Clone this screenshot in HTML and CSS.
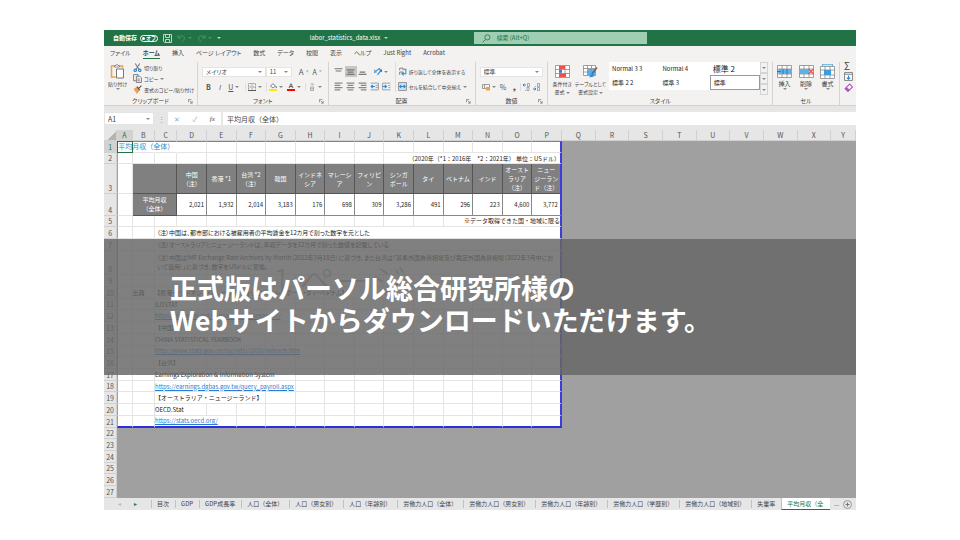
FILE: index.html
```html
<!DOCTYPE html>
<html lang="ja">
<head>
  <meta charset="UTF-8" />
  <meta name="viewport" content="width=device-width, initial-scale=1" />
  <title>labor_statistics_data.xlsx</title>
  <link rel="stylesheet" href="styles.css">
</head>
<body>
  <!-- アイコン定義 -->
  <svg class="defs" aria-hidden="true">
    <symbol id="i-save" viewBox="0 0 9 9"><path d="M.5.5h8v8h-7l-1-1zM2.5.5v3h4v-3M2.5 8.500v-3h4v3" fill="none" stroke="#b9d8c5"/></symbol>
    <symbol id="i-undo" viewBox="0 0 9 9"><path d="M1 1v3h3M1 4c2-3 6-3 6.500 0 0 2-2 3-3 4" fill="none" stroke="#4d9369"/></symbol>
    <symbol id="i-redo" viewBox="0 0 9 9"><path d="M8 1v3H5M8 4C6 1 2 1 1.500 4c0 2 2 3 3 4" fill="none" stroke="#4d9369"/></symbol>
    <symbol id="i-search" viewBox="0 0 8 8"><circle cx="4.800" cy="3" r="2.300" fill="none" stroke="#2f7d51" stroke-width=".8"/><path d="M3 5L.5 7.500" stroke="#2f7d51" stroke-width=".8"/></symbol>
    <symbol id="i-paste" viewBox="0 0 14 15"><path d="M4 2H1v11h4M9 2h3v2" fill="none" stroke="#e8a54c" stroke-width="1.500"/><path d="M4 3V1.500h1.500a1 1 0 0 1 2 0H9V3z" fill="#fff" stroke="#777" stroke-width=".8"/><path d="M6 5h7v9H6z" fill="#fff" stroke="#777"/></symbol>
    <symbol id="i-cut" viewBox="0 0 8 8"><path d="M2 .5L5.500 6M6 .5L2.500 6" stroke="#777" stroke-width=".9"/><circle cx="2" cy="6.500" r="1.100" fill="none" stroke="#2b88d8"/><circle cx="6" cy="6.500" r="1.100" fill="none" stroke="#2b88d8"/></symbol>
    <symbol id="i-copy" viewBox="0 0 8 8"><path d="M3 6H.5V.5h4V2M3 2h3l1.500 1.500v4H3zM4 4.500h2M4 6h2" fill="none" stroke="#777" stroke-width=".8"/></symbol>
    <symbol id="i-brush" viewBox="0 0 8 8"><path d="M.5 3.500l3-2 2.500 3L3.500 8z" fill="#f0a04b"/><path d="M3.500 1.500l2.500 3M5 3l2.500-2.500" stroke="#555"/></symbol>
    <symbol id="i-border" viewBox="0 0 8 8"><path d="M.5.5h7v7h-7zM4 .5v7M.5 4h7" fill="none" stroke="#999" stroke-dasharray="1 .5"/><path d="M0 7.500h8" stroke="#555"/></symbol>
    <symbol id="i-fill" viewBox="0 0 8 8"><path d="M1.500 3L4 .7 6.500 3 4 5z" fill="#fff" stroke="#666" stroke-width=".8"/><path d="M6.800 3l.7 2" stroke="#2b88d8"/><path d="M0 6h8v2H0z" fill="#ffeb00"/></symbol>
    <symbol id="i-color" viewBox="0 0 8 8"><path d="M2 5L4 .7 6 5M2.700 3.600h2.600" fill="none" stroke="#555" stroke-width=".9"/><path d="M0 6h8v2H0z" fill="#f00"/></symbol>
    <symbol id="i-ruby" viewBox="0 0 8 8"><path d="M2.500 1h3L4 2.500M2.500 4h3v3.500h-3zM2.500 5.700h3" fill="none" stroke="#999" stroke-width=".8"/></symbol>
    <symbol id="i-vtop" viewBox="0 0 8 8"><path d="M.5 1.500h7M1.500 3.500h5" stroke="#777"/></symbol>
    <symbol id="i-vmid" viewBox="0 0 8 8"><path d="M.5 2.500h7M1.500 4.500h5M.5 6.500h7" stroke="#777"/></symbol>
    <symbol id="i-vbot" viewBox="0 0 8 8"><path d="M1.500 4.500h5M.5 6.500h7" stroke="#777"/></symbol>
    <symbol id="i-left" viewBox="0 0 8 8"><path d="M.5 1h7M.5 3h5M.5 5h7M.5 7h5" stroke="#888" stroke-width=".9"/></symbol>
    <symbol id="i-center" viewBox="0 0 8 8"><path d="M.5 1h7M1.500 3h5M.5 5h7M1.500 7h5" stroke="#888" stroke-width=".9"/></symbol>
    <symbol id="i-right" viewBox="0 0 8 8"><path d="M.5 1h7M2.500 3h5M.5 5h7M2.500 7h5" stroke="#888" stroke-width=".9"/></symbol>
    <symbol id="i-angle" viewBox="0 0 8 8"><path d="M1 5l5-4M4 7l3.500-4.500M5.500 2.500h2v2" fill="none" stroke="#2b88d8"/><path d="M1 2.500l2 2.500" stroke="#888"/></symbol>
    <symbol id="i-outdent" viewBox="0 0 8 8"><path d="M.5 1h7v6h-7M5 3h2.500M5 5h2.500" fill="none" stroke="#999" stroke-width=".8"/><path d="M4.500 4H1M2.500 2.500L1 4l1.500 1.500" fill="none" stroke="#2b88d8"/></symbol>
    <symbol id="i-indent" viewBox="0 0 8 8"><path d="M7.500 1h-7v6h7M5.500 3h2M5.500 5h2" fill="none" stroke="#999" stroke-width=".8"/><path d="M.5 4H4M2.500 2.500L4 4 2.500 5.500" fill="none" stroke="#2b88d8"/></symbol>
    <symbol id="i-wrap" viewBox="0 0 8 8"><path d="M1.500 3V1h3v2M1.500 7V4.500h3" fill="none" stroke="#777" stroke-width=".8"/><path d="M5 2h2v4H3.500M5 4.500L3.500 6 5 7.500" fill="none" stroke="#2b88d8" stroke-width=".9"/></symbol>
    <symbol id="i-merge" viewBox="0 0 8 8"><path d="M.5.5h7v7h-7z" fill="#cfe6f7" stroke="#888" stroke-width=".8"/><path d="M1.500 4h5M3 2.500L1.500 4 3 5.500M5 2.500L6.500 4 5 5.500" fill="none" stroke="#2b88d8" stroke-width=".9"/></symbol>
    <symbol id="i-money" viewBox="0 0 8 8"><path d="M.5 1.500h7v4h-7zM2.500 1.500v4" fill="none" stroke="#888" stroke-width=".8"/><path d="M4 4h4v3.500H4z" fill="#f0a04b"/></symbol>
    <symbol id="i-dec1" viewBox="0 0 8 8"><path d="M0 2h3M1.500.7L0 2l1.500 1.300" fill="none" stroke="#2b88d8"/><path d="M4.500.5h2v3h-2zM2 7.500h1M4 4.500h2v3H4z" fill="none" stroke="#888" stroke-width=".7"/></symbol>
    <symbol id="i-dec2" viewBox="0 0 8 8"><path d="M0 6h3M1.500 4.700L3 6 1.500 7.300" fill="none" stroke="#2b88d8"/><path d="M4.500.5h2v3h-2zM4.500 4.500h2v3h-2zM2 3.500h1" fill="none" stroke="#888" stroke-width=".7"/></symbol>
    <symbol id="i-cond" viewBox="0 0 15 13"><path d="M.5.5h14v12H.5zM5 .5v12M10 .5v12M.5 4.500h14M.5 8.500h14" fill="#fff" stroke="#888" stroke-width=".8"/><path d="M4 1h6v3H4zM4 8.500h7v3.500H4z" fill="#f0504a"/><path d="M4 4.800h3v3H4z" fill="#2b88d8"/></symbol>
    <symbol id="i-tbl" viewBox="0 0 15 13"><path d="M.5.5h12v10H.5zM4.500.5v10M8.500.5v10M.5 3.500h12M.5 7h12" fill="#fff" stroke="#888" stroke-width=".8"/><path d="M4.500 4h8v6.500h-8z" fill="#5cace4"/><path d="M14 2.500L9 9" stroke="#666" stroke-width="1.500"/><path d="M9.500 8L6 12.500l5-1z" fill="#2b88d8"/></symbol>
    <symbol id="i-ins" viewBox="0 0 15 13"><path d="M.5.500h14v12H.5zM5 .5v12M10 .5v12M.5 4h14M.5 9h14" fill="#fff" stroke="#888" stroke-width=".8"/><path d="M2 4h13v5H2z" fill="#5cb3e8"/><path d="M0 6.500h4M2 4.500L0 6.500l2 2M6 4v5M10 4v5" fill="none" stroke="#1f7fc4"/></symbol>
    <symbol id="i-del" viewBox="0 0 15 13"><path d="M.5.500h14v12H.5zM5 .5v12M10 .5v12M.5 4h14M.5 9h14" fill="#fff" stroke="#888" stroke-width=".8"/><path d="M1 4h9v5H1z" fill="#5cb3e8"/><path d="M9.500 4l5 5M14.500 4l-5 5" stroke="#f0504a" stroke-width="1.300"/></symbol>
    <symbol id="i-fmt" viewBox="0 0 15 15"><path d="M.5 2.500h14v12H.5zM5 2.500v12M10 2.500v12M.5 6h14M.5 11h14" fill="#fff" stroke="#888" stroke-width=".8"/><path d="M4 6h7v5H4z" fill="#3f9cdc"/><path d="M2 .7h11M2.500 0v2M12.500 0v2" stroke="#5cb3e8"/></symbol>
    <symbol id="i-down" viewBox="0 0 8 8"><path d="M.5.5h7v7h-7zM.5 2h7" fill="#fff" stroke="#777" stroke-width=".8"/><path d="M4 3v3.500M2.500 5L4 6.500 5.500 5" fill="none" stroke="#2b88d8"/></symbol>
    <symbol id="i-erase" viewBox="0 0 8 8"><path d="M1 5l4-4 2.500 2.500-4 4z" fill="#fff" stroke="#b455c0"/><path d="M1 5l1.500-1.500L5 6 3.500 7.500z" fill="#b455c0"/></symbol>
    <symbol id="i-launch" viewBox="0 0 6 6"><path d="M.5 4V.5H4M2 2l3 3M5 2.500V5H2.500" fill="none" stroke="#777" stroke-width=".9"/></symbol>
    <symbol id="i-plus" viewBox="0 0 9 9"><circle cx="4.500" cy="4.500" r="4" fill="none" stroke="#888" stroke-width=".8"/><path d="M4.500 2.500v4M2.500 4.500h4" stroke="#777"/></symbol>
  </svg>

  <main class="app">
    <header class="titlebar">
      <div class="quick">
        <label class="autosave">自動保存 <input type="checkbox" class="toggle"><span class="toggle-text">オフ</span></label>
        <button aria-label="上書き保存"><svg class="icon"><use href="#i-save"/></svg></button>
        <button aria-label="元に戻す"><svg class="icon"><use href="#i-undo"/></svg><i class="caret dim"></i></button>
        <button aria-label="やり直し"><svg class="icon"><use href="#i-redo"/></svg><i class="caret dim"></i></button>
        <button aria-label="カスタマイズ"><i class="caret"></i></button>
      </div>
      <button class="filename">labor_statistics_data.xlsx<i class="caret"></i></button>
      <label class="search"><svg class="icon"><use href="#i-search"/></svg><input type="text" placeholder="検索 (Alt+Q)" aria-label="検索"></label>
    </header>

    <nav class="menu">
      <a href="#">ファイル</a>
      <a href="#" class="current">ホーム</a>
      <a href="#">挿入</a>
      <a href="#">ページ レイアウト</a>
      <a href="#">数式</a>
      <a href="#">データ</a>
      <a href="#">校閲</a>
      <a href="#">表示</a>
      <a href="#">ヘルプ</a>
      <a href="#">Just Right</a>
      <a href="#">Acrobat</a>
    </nav>

    <section class="ribbon">
      <div class="group">
        <div class="tools">
          <button class="big"><svg class="icon-lg"><use href="#i-paste"/></svg>貼り付け<i class="caret"></i></button>
          <div class="stack">
            <button><svg class="icon"><use href="#i-cut"/></svg>切り取り</button>
            <button><svg class="icon"><use href="#i-copy"/></svg>コピー <i class="caret"></i></button>
            <button><svg class="icon"><use href="#i-brush"/></svg>書式のコピー/貼り付け</button>
          </div>
        </div>
        <div class="caption">クリップボード<svg class="launch"><use href="#i-launch"/></svg></div>
      </div>

      <div class="group">
        <div class="rows">
          <div class="row">
            <span class="select font-name"><select aria-label="フォント"><option>メイリオ</option></select><i class="caret"></i></span>
            <span class="select font-size"><select aria-label="サイズ"><option>11</option></select><i class="caret"></i></span>
            <button class="letter big-a">A<sup>^</sup></button>
            <button class="letter">A<sup>ˇ</sup></button>
          </div>
          <div class="row spread">
            <button class="letter"><b>B</b></button>
            <button class="letter"><em>I</em></button>
            <button class="letter"><u>U</u><i class="caret"></i></button>
            <button class="split" aria-label="罫線"><svg class="icon"><use href="#i-border"/></svg><i class="caret"></i></button>
            <button class="split" aria-label="塗りつぶし"><svg class="icon"><use href="#i-fill"/></svg><i class="caret"></i></button>
            <button aria-label="フォントの色"><svg class="icon"><use href="#i-color"/></svg><i class="caret"></i></button>
            <button class="split" aria-label="ふりがな"><svg class="icon"><use href="#i-ruby"/></svg><i class="caret"></i></button>
          </div>
        </div>
        <div class="caption">フォント<svg class="launch"><use href="#i-launch"/></svg></div>
      </div>

      <div class="group">
        <div class="align">
          <div class="icons">
            <button aria-label="上揃え"><svg class="icon"><use href="#i-vtop"/></svg></button>
            <button aria-label="上下中央揃え" class="pressed"><svg class="icon"><use href="#i-vmid"/></svg></button>
            <button aria-label="下揃え"><svg class="icon"><use href="#i-vbot"/></svg></button>
            <button aria-label="方向" class="wide"><svg class="icon"><use href="#i-angle"/></svg><i class="caret"></i></button>
            <button aria-label="左揃え"><svg class="icon"><use href="#i-left"/></svg></button>
            <button aria-label="中央揃え"><svg class="icon"><use href="#i-center"/></svg></button>
            <button aria-label="右揃え"><svg class="icon"><use href="#i-right"/></svg></button>
            <button aria-label="インデントを減らす"><svg class="icon"><use href="#i-outdent"/></svg></button>
            <button aria-label="インデントを増やす"><svg class="icon"><use href="#i-indent"/></svg></button>
          </div>
          <div class="rows merge">
            <button><svg class="icon"><use href="#i-wrap"/></svg>折り返して全体を表示する</button>
            <button><svg class="icon"><use href="#i-merge"/></svg>セルを結合して中央揃え <i class="caret"></i></button>
          </div>
        </div>
        <div class="caption">配置<svg class="launch"><use href="#i-launch"/></svg></div>
      </div>

      <div class="group">
        <div class="rows">
          <div class="row"><span class="select format"><select aria-label="表示形式"><option>標準</option></select><i class="caret"></i></span></div>
          <div class="row spread">
            <button aria-label="通貨"><svg class="icon"><use href="#i-money"/></svg><i class="caret"></i></button>
            <button class="letter">%</button>
            <button class="letter"><b>❟</b></button>
            <button aria-label="小数点以下の桁数を増やす" class="split"><svg class="icon"><use href="#i-dec1"/></svg></button>
            <button aria-label="小数点以下の桁数を減らす"><svg class="icon"><use href="#i-dec2"/></svg></button>
          </div>
        </div>
        <div class="caption">数値<svg class="launch"><use href="#i-launch"/></svg></div>
      </div>

      <div class="group">
        <div class="tools styles">
          <button class="big"><svg class="icon-lg"><use href="#i-cond"/></svg>条件付き<span>書式 <i class="caret"></i></span></button>
          <button class="big"><svg class="icon-lg"><use href="#i-tbl"/></svg>テーブルとして<span>書式設定 <i class="caret"></i></span></button>
          <div class="gallery">
            <button>Normal 3 3</button>
            <button>Normal 4</button>
            <button class="wide-style">標準 2</button>
            <button>標準 2 2</button>
            <button>標準 3</button>
            <button class="chosen">標準</button>
          </div>
          <div class="scroller">
            <button aria-label="上へ"><i class="caret"></i></button>
            <button aria-label="下へ"><i class="caret"></i></button>
            <button aria-label="その他"><i class="caret"></i></button>
          </div>
        </div>
        <div class="caption">スタイル</div>
      </div>

      <div class="group">
        <div class="tools cells">
          <button class="big"><svg class="icon-lg"><use href="#i-ins"/></svg>挿入<i class="caret"></i></button>
          <button class="big"><svg class="icon-lg"><use href="#i-del"/></svg>削除<i class="caret"></i></button>
          <button class="big"><svg class="icon-lg"><use href="#i-fmt"/></svg>書式<i class="caret"></i></button>
        </div>
        <div class="caption">セル</div>
      </div>

      <div class="group edit">
        <button class="sigma">Σ</button>
        <button aria-label="フィル"><svg class="icon"><use href="#i-down"/></svg></button>
        <button aria-label="クリア"><svg class="icon"><use href="#i-erase"/></svg></button>
      </div>
    </section>

    <div class="formula">
      <span class="select name-box"><select aria-label="名前ボックス"><option>A1</option></select><i class="caret"></i></span>
      <span class="dots">⋮</span>
      <div class="fx"><button>✕</button><button>✓</button><button class="dark">fx</button></div>
      <input type="text" value="平均月収（全体）" aria-label="数式バー">
    </div>

    <div class="sheet">
      <table id="sheet">
        <colgroup>
          <col class="c-head"><col class="c-a"><col class="c-b" span="2">
          <col class="c-data" span="13"><col class="c-wide" span="8"><col class="c-last">
        </colgroup>
        <thead></thead>
        <tbody></tbody>
      </table>
      <span class="watermark">1 ページ</span>
    </div>

    <nav class="tabs">
      <span class="arrows"><button aria-label="前">◂</button><button aria-label="次" class="on">▸</button></span>
      <a href="#">目次</a>
      <a href="#">GDP</a>
      <a href="#">GDP成長率</a>
      <a href="#">人口（全体）</a>
      <a href="#">人口（男女別）</a>
      <a href="#">人口（年齢別）</a>
      <a href="#">労働力人口（全体）</a>
      <a href="#">労働力人口（男女別）</a>
      <a href="#">労働力人口（年齢別）</a>
      <a href="#">労働力人口（学歴別）</a>
      <a href="#">労働力人口（地域別）</a>
      <a href="#">失業率</a>
      <a href="#" class="active">平均月収（全</a>
      <span class="more">...</span>
      <button class="add" aria-label="新しいシート"><svg class="icon"><use href="#i-plus"/></svg></button>
    </nav>

    <div class="notice">
      <p>正式版はパーソル総合研究所様の<br>Webサイトからダウンロードいただけます。</p>
    </div>
  </main>

  <script>
    const LAST_ROW = 27;
    const PAGE_ROWS = 21;  // 印刷範囲の最終行
    const PAGE_COLS = 16;  // A〜P

    const countries = ['中国<br>（注）', '香港 *1', '台湾 *2<br>（注）', '韓国', 'インドネシア', 'マレーシア', 'フィリピン', 'シンガ<br>ポール', 'タイ', 'ベトナム', 'インド', 'オーストラリア（注）', 'ニュー<br>ジーラン<br>ド（注）'];
    const income = ['2,021', '1,932', '2,014', '3,183', '176', '698', '309', '3,286', '491', '296', '223', '4,600', '3,772'];
    const link = url => `<a href="${url}">${url}</a>`;

    // 各行のセル: [列数, クラス, 内容]
    const rows = {
      1: [[1, 'selected', '平均月収（全体）'], [1, 'spill', ''], [1, 'spill', '']],
      2: [[10, 'blank', ''], [6, 'right', '（2020年（*1：2016年　*2：2021年） 単位：USドル）']],
      3: [[1, '', ''], [2, 'dark', ''], ...countries.map(c => [1, 'dark', c])],
      4: [[1, '', ''], [2, 'dark', '平均月収<br>（全体）'], ...income.map(v => [1, 'num', v])],
      5: [[12, 'blank', ''], [4, 'right', '※データ取得できた国・地域に限る']],
      6: [[1, '', ''], [1, '', ''], [14, 'note', '（注）中国は、都市部における被雇用者の平均賃金を12カ月で割った数字を元とした']],
      7: [[1, '', ''], [1, '', ''], [14, 'note', '（注）オーストラリアとニュージーランドは、年収データを12カ月で割った数値を記載している']],
      8: [[1, '', ''], [1, '', ''], [14, 'note', '（注）中国はIMF Exchange Rate Archives by Month（2022年3月18日）に基づき、また台湾は「基準外国為替相場及び裁定外国為替相場（2022年3月中にお<br>いて適用）」に基づき、数字をUSドルに変換。']],
      10: [[1, '', ''], [1, '', '出典'], [11, 'note', '【香港・インドネシア・マレーシア・フィリピン・シンガポール・タイ・ベトナム】']],
      11: [[1, '', ''], [1, '', ''], [2, '', 'ILOSTAT']],
      12: [[1, '', ''], [1, '', ''], [5, '', link('https://www.ilo.org/shinyapps/bulkexplorer/')]],
      13: [[1, '', ''], [1, '', ''], [2, '', '【中国】']],
      14: [[1, '', ''], [1, '', ''], [4, '', 'CHINA STATISTICAL YEARBOOK']],
      15: [[1, '', ''], [1, '', ''], [5, '', link('http://www.stats.gov.cn/tjsj/ndsj/2020/indexeh.htm')]],
      16: [[1, '', ''], [1, '', ''], [2, '', '【台湾】']],
      17: [[1, '', ''], [1, '', ''], [5, '', 'Earnings Exploration &amp; Information System']],
      18: [[1, '', ''], [1, '', ''], [5, '', link('https://earnings.dgbas.gov.tw/query_payroll.aspx')]],
      19: [[1, '', ''], [1, '', ''], [4, '', '【オーストラリア・ニュージーランド】']],
      20: [[1, '', ''], [1, '', ''], [2, '', 'OECD.Stat']],
      21: [[1, '', ''], [1, '', ''], [3, '', link('https://stats.oecd.org/')]]
    };

    const thead = document.querySelector('#sheet thead');
    const tbody = document.querySelector('#sheet tbody');

    // 列見出し
    const letters = 'ABCDEFGHIJKLMNOPQRSTUVWXY'.split('');
    thead.innerHTML = '<tr><th class="corner"></th>' +
      letters.map(l => `<th class="${l === 'A' ? 'on' : ''}">${l}</th>`).join('') + '</tr>';

    for (let r = 1; r <= LAST_ROW; r++) {
      let html = `<th class="${r === 1 ? 'on' : ''}">${r}</th>`;

      if (r <= PAGE_ROWS) {
        const cells = [...(rows[r] || [])];
        let used = cells.reduce((sum, c) => sum + c[0], 0);
        for (; used < PAGE_COLS; used++) cells.push([1, '', '']);
        // 空の結合セルは罫線付きの単独セルに分ける
        const list = cells.flatMap(c => c[1] === 'blank' ? Array(c[0]).fill([1, '', '']) : [c]);
        html += list.map((c, i) => {
          const edge = (i === 0 ? ' first' : '') + (i === list.length - 1 ? ' last' : '');
          return `<td colspan="${c[0]}" class="${c[1]}${edge}">${c[2]}</td>`;
        }).join('');
      }
      if (r === 1) html += `<td class="outside" colspan="9" rowspan="${LAST_ROW}"></td>`;
      if (r === PAGE_ROWS + 1) html += `<td class="outside" colspan="16" rowspan="${LAST_ROW - PAGE_ROWS}"></td>`;

      tbody.insertAdjacentHTML('beforeend', `<tr class="r${r}">${html}</tr>`);
    }
  </script>
</body>
</html>
```
FILE: styles.css
```css
* {
  box-sizing: border-box;
}
body {
  margin: 0;
  padding: 30px 104px;
  background: #fff;
  color: #444;
  font-family: "Noto Sans CJK JP", "Noto Sans", sans-serif;
  font-size: 6px;
  line-height: 8px;
}
.defs {
  display: none;
}
.app {
  position: relative;
  background: #f3f2f1;
}
button, input, select {
  font: inherit;
  color: inherit;
  background: none;
  border: 0;
  padding: 0;
  margin: 0;
}
button {
  display: flex;
  align-items: center;
  gap: 2px;
  white-space: nowrap;
}
a {
  color: inherit;
  text-decoration: none;
}
.icon {
  width: 9px;
  height: 9px;
  flex: none;
}
.icon-lg {
  width: 15px;
  height: 15px;
}
.caret {
  display: inline-block;
  border: 2px solid transparent;
  border-top-color: #888;
  border-bottom: 0;
  vertical-align: middle;
}

/* Title bar */
.titlebar {
  display: grid;
  grid-template-columns: 206fr 164fr 174fr 209fr;
  align-items: center;
  height: 16px;
  background: #217346;
  color: #fff;
}
.titlebar .caret {
  border-top-color: #b9d8c5;
}
.titlebar .dim {
  border-top-color: #4d9369;
}
.quick {
  display: flex;
  align-items: center;
  gap: 5px;
  padding-left: 9px;
}
.autosave {
  position: relative;
  display: flex;
  align-items: center;
  gap: 3px;
  font-weight: bold;
}
.toggle {
  appearance: none;
  width: 18px;
  height: 7px;
  border: 1px solid #fff;
  border-radius: 4px;
}
.toggle::before {
  content: "";
  display: block;
  width: 3px;
  height: 3px;
  margin: 1px;
  border-radius: 50%;
  background: #fff;
}
.toggle-text {
  position: absolute;
  right: 2px;
  font-size: 5px;
}
.filename {
  gap: 4px;
}
.search {
  display: flex;
  align-items: center;
  gap: 6px;
  height: 12px;
  padding-left: 8px;
  background: #a0ceb2;
  color: #217346;
}
.search input {
  flex: 1;
  min-width: 0;
}
.search input::placeholder {
  color: #217346;
}

/* Menu */
.menu {
  display: flex;
  gap: 12px;
  height: 14px;
  padding: 3px 6px 0;
  font-feature-settings: "palt";
}
.menu .current {
  border-bottom: 1px solid #217346;
  height: 10px;
  font-weight: bold;
}

/* Ribbon */
.ribbon {
  display: grid;
  grid-template-columns: 94fr 131fr 147fr 73fr 225fr 67fr 16fr;
  height: 46px;
  padding: 2px 0 0;
  border-bottom: 1px solid #d0d0d0;
  font-feature-settings: "palt";
}
.group {
  display: flex;
  flex-direction: column;
  justify-content: space-between;
  min-width: 0;
  padding: 0 4px;
  border-right: 1px solid #d4d4d4;
}
.caption {
  position: relative;
  text-align: center;
}
.launch {
  position: absolute;
  right: 0;
  top: 2px;
  width: 5px;
  height: 5px;
}
.tools {
  display: flex;
  gap: 6px;
}
.big {
  flex-direction: column;
  gap: 1px;
  padding-top: 2px;
  font-size: 5px;
  line-height: 7px;
}
.stack {
  display: flex;
  flex-direction: column;
  gap: 2px;
  padding-top: 1px;
  font-size: 5px;
}
.rows {
  display: flex;
  flex-direction: column;
  gap: 4px;
  padding-top: 4px;
}
.row {
  display: flex;
  align-items: center;
  height: 11px;
}
.row .icon {
  width: 8px;
  height: 8px;
}
.spread {
  justify-content: space-between;
  padding: 0 2px;
}
.split {
  border-left: 1px solid #ddd;
  padding-left: 2px;
}
.select {
  display: flex;
  align-items: center;
  height: 10px;
  padding: 0 3px;
  background: #fff;
  border: 1px solid #e4e4e4;
}
.select select {
  appearance: none;
  flex: 1;
  min-width: 0;
}
.font-name {
  flex: 1;
}
.font-size {
  width: 26px;
  margin-right: 5px;
}
.format {
  flex: 1;
}
.letter {
  font-size: 7px;
  color: #555;
  padding: 0 2px;
}
.letter sup {
  font-size: 5px;
  color: #2b88d8;
}
.big-a {
  font-size: 8px;
}
.align {
  display: flex;
  gap: 2px;
}
.icons {
  display: grid;
  grid-template-columns: repeat(5, 12px);
  gap: 4px 0;
  padding-top: 4px;
}
.icons button {
  height: 11px;
  justify-content: center;
}
.icons .wide {
  grid-column: span 2;
}
.icons .pressed {
  background: #c8c6c4;
}
.merge {
  border-left: 1px solid #ddd;
  padding-left: 2px;
  font-size: 5px;
}
.merge button {
  height: 11px;
}
.styles {
  gap: 3px;
}
.gallery {
  display: grid;
  grid-template-columns: repeat(3, 1fr);
  flex: 1;
  height: 28px;
  background: #fff;
  color: #222;
}
.gallery button {
  padding-left: 3px;
}
.gallery .wide-style {
  font-size: 8px;
}
.gallery .chosen {
  border: 1px solid #999;
}
.scroller {
  display: flex;
  flex-direction: column;
  width: 8px;
  margin-left: -3px;
}
.scroller button {
  flex: 1;
  justify-content: center;
  border: 1px solid #d4d4d4;
}
.cells {
  justify-content: space-between;
}
.cells .big {
  font-size: 6px;
}
.edit {
  border: 0;
  justify-content: flex-start;
  gap: 2px;
}
.sigma {
  font-size: 10px;
}

/* Formula bar */
.formula {
  display: flex;
  align-items: center;
  padding: 6px 0 5px;
  background: #e6e6e6;
  font-size: 7px;
}
.name-box {
  width: 50px;
  height: 13px;
}
.dots {
  width: 14px;
  text-align: center;
  color: #999;
}
.fx {
  display: flex;
  justify-content: space-around;
  width: 53px;
  height: 13px;
  margin-right: 2px;
  background: #fff;
  color: #aaa;
}
.fx .dark {
  color: #444;
  font-family: "Liberation Serif", serif;
  font-style: italic;
}
.formula input {
  flex: 1;
  height: 13px;
  padding-left: 4px;
  background: #fff;
}

/* Sheet */
.sheet {
  position: relative;
}
#sheet {
  width: 100%;
  height: 368px;
  table-layout: fixed;
  border-collapse: separate;
  border-spacing: 0;
}
.c-head { width: 13px; }
.c-a { width: 15px; }
.c-b { width: 22px; }
.c-data { width: 29px; }
.c-wide { width: 33px; }
.c-last { width: 24px; }
#sheet tr { height: 11px; }
#sheet .r3 { height: 28px; }
#sheet .r4 { height: 20px; }
#sheet .r8 { height: 23px; }
#sheet th {
  padding: 0;
  background: #e6e6e6;
  border-right: 1px solid #d0d0d0;
  border-bottom: 1px solid #d0d0d0;
  color: #555;
  font-size: 7px;
  font-weight: normal;
  line-height: 9px;
  vertical-align: bottom;
}
#sheet th.on {
  background: #d2d2d2;
  color: #217346;
}
#sheet th.corner {
  background: linear-gradient(135deg, #e6e6e6 60%, #b4b4b4 60%);
}
#sheet td {
  padding: 0;
  background: #fff;
  border-right: 1px solid #e4e4e4;
  border-bottom: 1px solid #e4e4e4;
  color: #222;
  line-height: 9px;
}
#sheet .r1 td {
  border-top: 1px solid #7777dd;
}
#sheet td.first {
  border-left: 1px solid #9999e0;
}
#sheet .r21 td {
  border-bottom: 2px solid #2c2ce0;
}
#sheet td.selected {
  position: relative;
  border: 1px solid #217346;
  color: #2b8ad0;
  font-size: 7px;
  white-space: nowrap;
  z-index: 1;
}
#sheet td.spill {
  border-right-color: transparent;
}
#sheet td.dark {
  background: #808080;
  border-right-color: #555;
  border-bottom-color: #555;
  color: #fff;
  text-align: center;
}
#sheet td.num {
  border-right-color: #888;
  border-bottom-color: #888;
  padding-right: 2px;
  text-align: right;
}
#sheet td.last {
  border-right: 2px solid #3c3cdc;
}
#sheet td.right {
  text-align: right;
  white-space: nowrap;
}
#sheet td.note {
  padding-left: 2px;
  font-feature-settings: "palt";
  white-space: nowrap;
}
#sheet td a {
  color: #2b7cd3;
  text-decoration: underline;
}
#sheet td.outside {
  background: #a0a0a0;
  border: 0;
}
.watermark {
  position: absolute;
  left: 168px;
  top: 129px;
  color: #b4b4b4;
  font-size: 36px;
  font-weight: 300;
  line-height: 40px;
}

/* Sheet tabs */
.tabs {
  display: flex;
  align-items: center;
  height: 12px;
  background: #e6e6e6;
  white-space: nowrap;
}
.arrows {
  display: flex;
  justify-content: space-around;
  width: 47px;
  padding: 0 8px;
  color: #bbb;
}
.arrows .on {
  color: #217346;
}
.tabs a {
  padding: 0 6px 0 5px;
  border-left: 1px solid #c0c0c0;
}
.tabs .active {
  flex: 1;
  min-width: 0;
  height: 12px;
  line-height: 11px;
  background: #fff;
  border-bottom: 1px solid #217346;
  color: #217346;
}
.more {
  padding: 0 4px;
}
.add {
  padding-right: 4px;
}

/* Notice */
.notice {
  position: absolute;
  z-index: 2;
  top: 209px;
  left: 0;
  right: 0;
  padding: 33px 66px 39px;
  background: rgba(102, 102, 102, 0.83);
}
.notice p {
  margin: 0;
  color: #fff;
  font-size: 27px;
  font-weight: bold;
  line-height: 32px;
}
```
